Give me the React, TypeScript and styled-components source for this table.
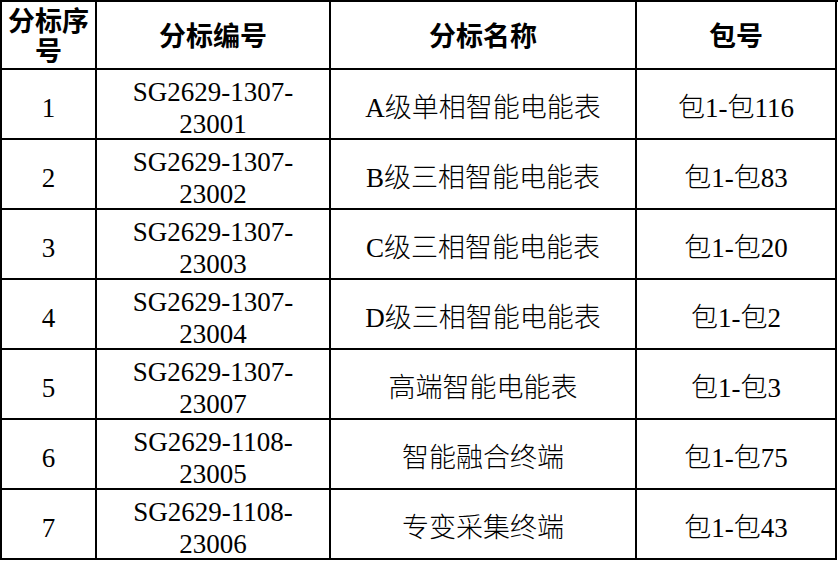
import React from "react";
import styled, { createGlobalStyle } from "styled-components";

const Global = createGlobalStyle`
  html, body { margin: 0; padding: 0; background: #fff; }
  body { font-family: "Liberation Serif", "Noto Sans CJK SC", serif; color: #000; }
`;

const Table = styled.div`
  display: grid;
  grid-template-columns: 95px 234px 306px 200px;
  grid-template-rows: 68px repeat(7, 70px);
  width: 837px;
  border-top: 2px solid #000;
  border-left: 2px solid #000;
  background: #fff;
`;

const Cell = styled.div<{ $head?: boolean }>`
  display: flex;
  flex-direction: column;
  align-items: center;
  justify-content: center;
  text-align: center;
  border-right: 2px solid #000;
  border-bottom: 2px solid #000;
  font-family: "Liberation Serif", "Noto Sans CJK SC", serif;
  font-size: 27px;
  line-height: ${(p) => (p.$head ? "30px" : "32px")};
  font-weight: ${(p) => (p.$head ? 700 : 300)};
  padding: ${(p) => (p.$head ? "4px 4px 0" : "8px 4px 0")};
  box-sizing: border-box;
  color: #000;
`;

const Line = styled.span`
  display: block;
  white-space: nowrap;
`;

const rows = [
  { no: "1", code: ["SG2629-1307-", "23001"], name: "A级单相智能电能表", pkg: "包1-包116" },
  { no: "2", code: ["SG2629-1307-", "23002"], name: "B级三相智能电能表", pkg: "包1-包83" },
  { no: "3", code: ["SG2629-1307-", "23003"], name: "C级三相智能电能表", pkg: "包1-包20" },
  { no: "4", code: ["SG2629-1307-", "23004"], name: "D级三相智能电能表", pkg: "包1-包2" },
  { no: "5", code: ["SG2629-1307-", "23007"], name: "高端智能电能表", pkg: "包1-包3" },
  { no: "6", code: ["SG2629-1108-", "23005"], name: "智能融合终端", pkg: "包1-包75" },
  { no: "7", code: ["SG2629-1108-", "23006"], name: "专变采集终端", pkg: "包1-包43" },
];

export default function App() {
  return (
    <>
      <Global />
      <Table>
        <Cell $head>
          <Line>分标序</Line>
          <Line>号</Line>
        </Cell>
        <Cell $head>分标编号</Cell>
        <Cell $head>分标名称</Cell>
        <Cell $head>包号</Cell>
        {rows.map((r) => (
          <React.Fragment key={r.no}>
            <Cell>{r.no}</Cell>
            <Cell>
              {r.code.map((c) => (
                <Line key={c}>{c}</Line>
              ))}
            </Cell>
            <Cell>{r.name}</Cell>
            <Cell>{r.pkg}</Cell>
          </React.Fragment>
        ))}
      </Table>
    </>
  );
}
